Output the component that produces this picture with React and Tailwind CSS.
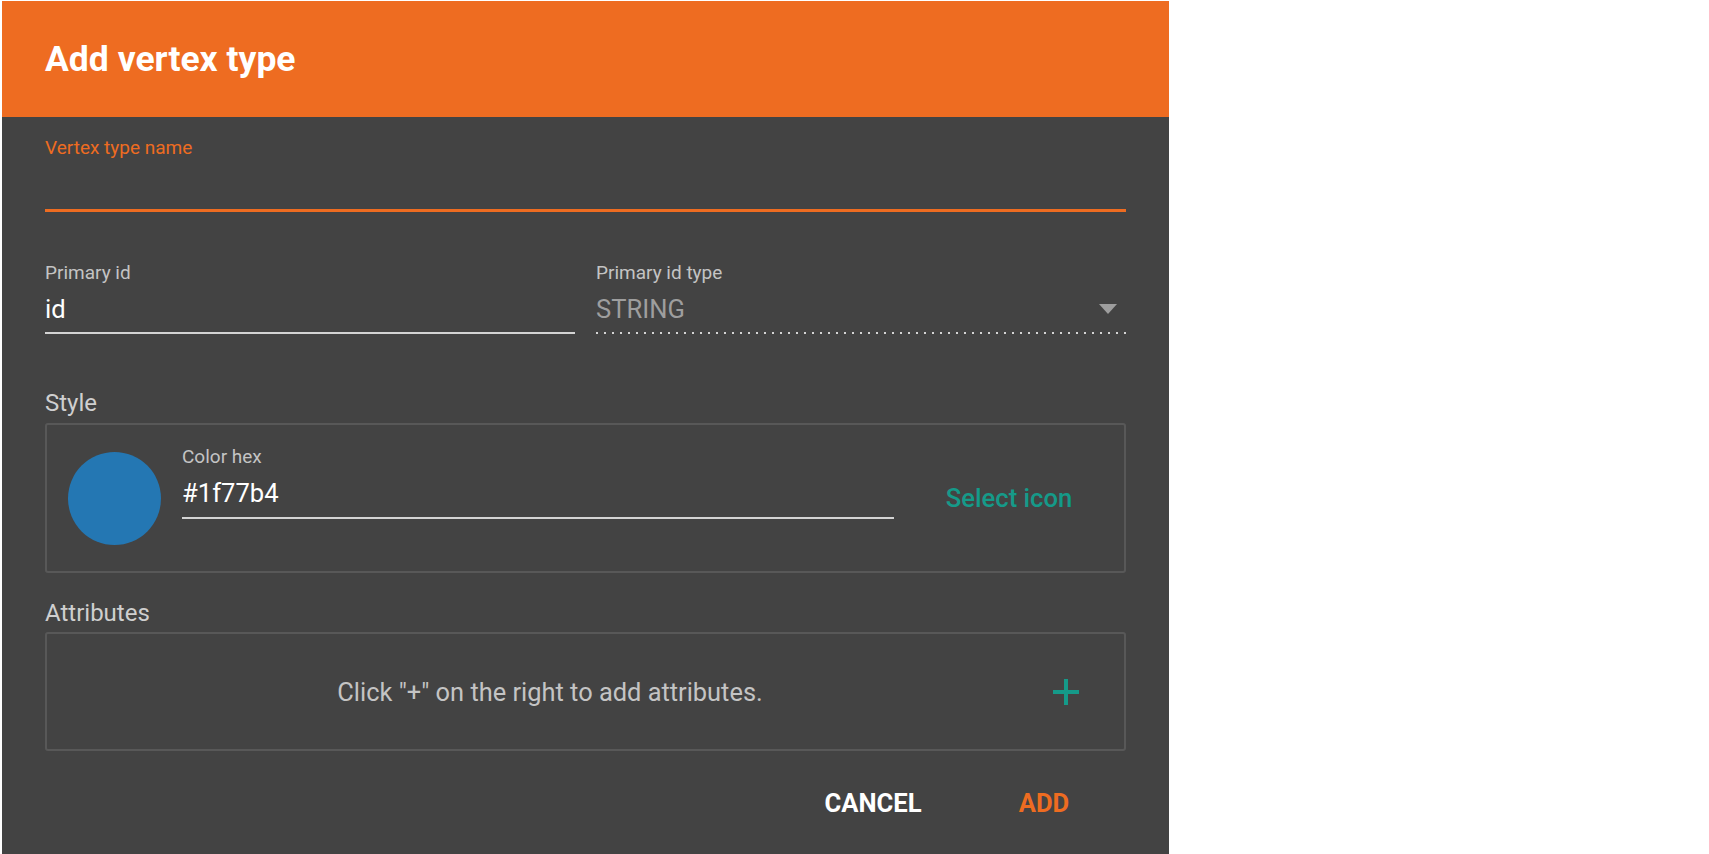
import React from "react";

export default function App() {
  const font = { fontFamily: "Roboto, 'Noto Sans', 'Liberation Sans', sans-serif" };
  return (
    <div className="min-h-[854px] w-full bg-white overflow-hidden" style={font}>
      <div className="ml-[2px] mt-[1px] w-[1167px] h-[853px] bg-[#434343] flex flex-col">
        {/* Header */}
        <div className="h-[116px] bg-[#ee6c21] flex items-center pl-[43px]">
          <h1 className="text-[35.5px] leading-[44px] font-bold text-white">Add vertex type</h1>
        </div>

        {/* Body */}
        <div className="px-[43px] flex flex-col">
          {/* Vertex type name */}
          <div className="pt-[20px]">
            <div className="text-[19px] leading-[22px] text-[#ee6c21]">Vertex type name</div>
            <div className="mt-[50px] h-[3px] bg-[#ee6c21]" />
          </div>

          {/* Primary id row */}
          <div className="mt-[50px] grid grid-cols-2 gap-[21px]">
            <div className="flex flex-col">
              <div className="text-[19px] leading-[22px] text-[#c4c4c4]">Primary id</div>
              <div className="mt-[10px] text-[25.6px] leading-[30px] text-white">id</div>
              <div className="mt-[8px] h-[2px] bg-[#d4d4d4]" />
            </div>
            <div className="flex flex-col">
              <div className="text-[19px] leading-[22px] text-[#c4c4c4]">Primary id type</div>
              <div className="mt-[10px] flex items-center justify-between h-[30px]">
                <span className="text-[25.6px] leading-[30px] text-[#9e9e9e]">STRING</span>
                <svg width="18" height="10" viewBox="0 0 18 10" className="mr-[9px]">
                  <polygon points="0,0 18,0 9,10" fill="#9e9e9e" />
                </svg>
              </div>
              <div className="mt-[8px] h-[2px] bg-[repeating-linear-gradient(to_right,#d4d4d4_0px,#d4d4d4_2.5px,transparent_2.5px,transparent_8px)]" />
            </div>
          </div>

          {/* Style */}
          <div className="mt-[55px] text-[24px] leading-[28px] text-[#cfcfcf]">Style</div>
          <div className="mt-[6px] h-[150px] border-2 border-[#585858] rounded-[3px] flex items-center pl-[21px]">
            <div className="w-[93px] h-[93px] rounded-full bg-[#2477b3] shrink-0" />
            <div className="ml-[21px] w-[712px] flex flex-col pb-[31px]">
              <div className="text-[19px] leading-[22px] text-[#c4c4c4]">Color hex</div>
              <div className="mt-[10px] text-[25.6px] leading-[30px] text-white">#1f77b4</div>
              <div className="mt-[9px] h-[2px] bg-[#d4d4d4]" />
            </div>
            <div className="flex-1 flex justify-center">
              <button className="text-[25.6px] leading-[30px] font-medium text-[#159a89]">Select icon</button>
            </div>
          </div>

          {/* Attributes */}
          <div className="mt-[26px] text-[24px] leading-[28px] text-[#cfcfcf]">Attributes</div>
          <div className="mt-[5px] h-[119px] border-2 border-[#585858] rounded-[3px] flex items-center">
            <div className="flex-1 text-center pl-[11px] text-[25.4px] leading-[30px] text-[#c4c4c4]">
              Click "+" on the right to add attributes.
            </div>
            <button className="w-[48px] h-[48px] mr-[34px] flex items-center justify-center">
              <svg width="26" height="26" viewBox="0 0 26 26">
                <rect x="11" y="0" width="4" height="26" fill="#159a89" />
                <rect x="0" y="11" width="26" height="4" fill="#159a89" />
              </svg>
            </button>
          </div>

          {/* Buttons */}
          <div className="mt-[37px] flex justify-end pr-[22px] gap-[51px]">
            <button className="w-[120px] text-[25.6px] leading-[30px] font-bold text-white">CANCEL</button>
            <button className="w-[120px] text-[25.6px] leading-[30px] font-bold text-[#ee6c21]">ADD</button>
          </div>
        </div>
      </div>
    </div>
  );
}
